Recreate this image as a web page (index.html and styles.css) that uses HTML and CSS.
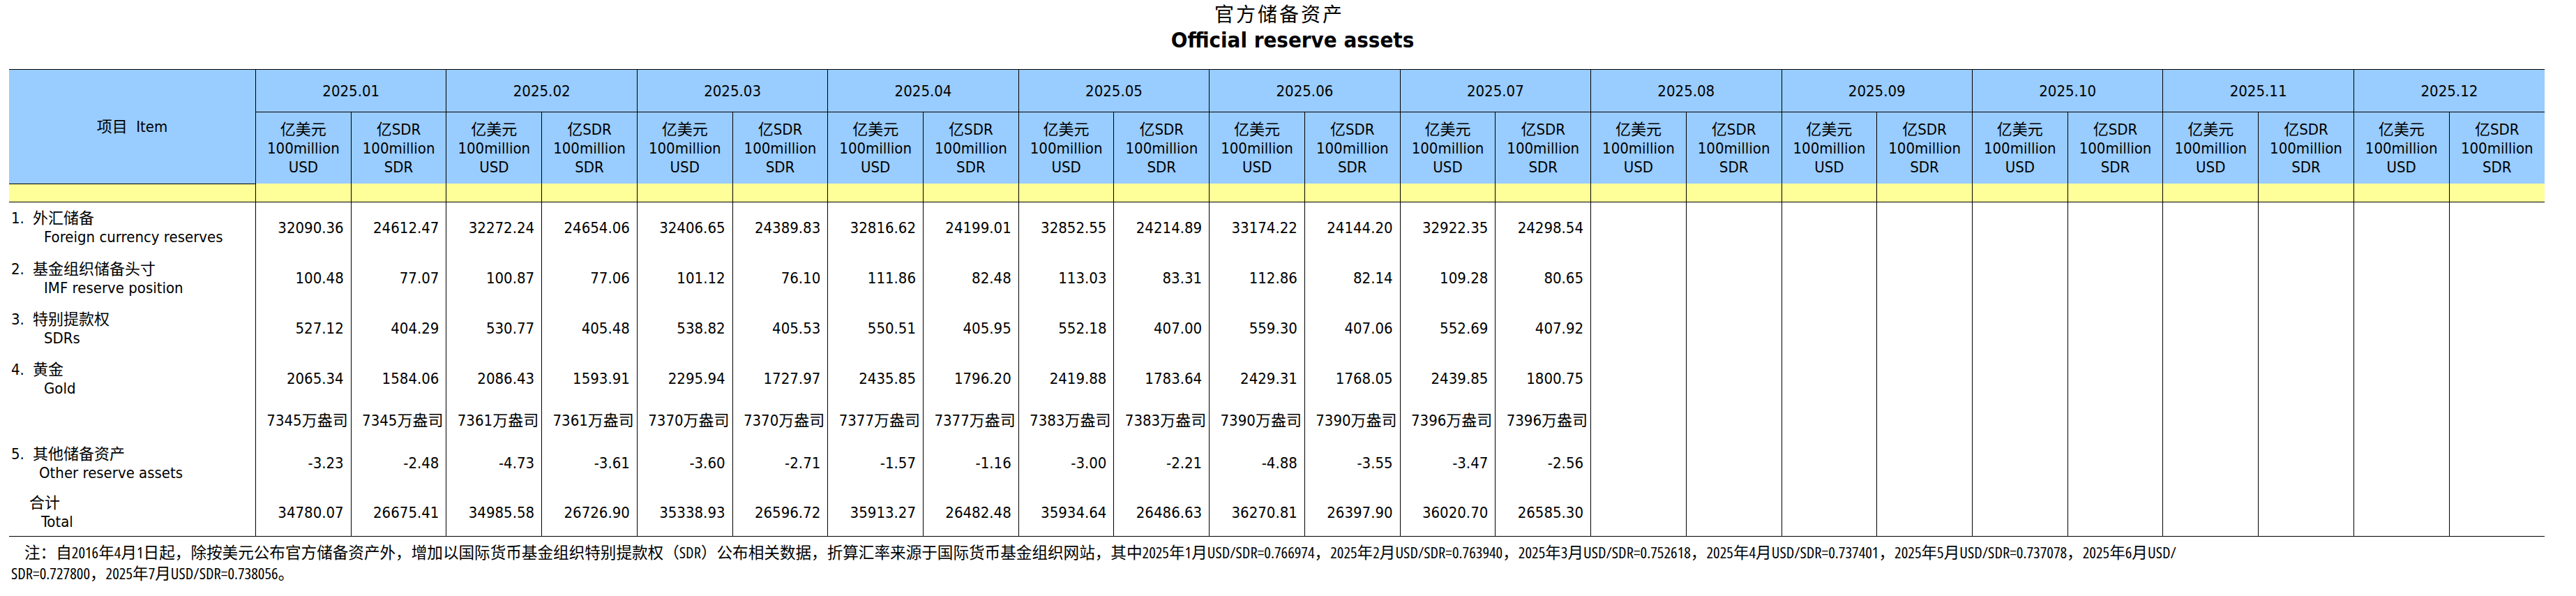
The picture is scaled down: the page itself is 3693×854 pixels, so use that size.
FILE: index.html
```html
<!DOCTYPE html>
<html lang="zh-CN">
<head>
<meta charset="utf-8">
<title>官方储备资产 Official reserve assets</title>
<link rel="stylesheet" href="styles.css">
</head>
<body>
<div class="page">
  <div class="title title-zh">官方储备资产</div>
  <div class="title title-en">Official reserve assets</div>
  <table class="reserves">
    <thead>
      <tr class="months">
        <th class="item-head" rowspan="2">项目&nbsp;&nbsp;Item</th>
        <th colspan="2">2025.01</th>
        <th colspan="2">2025.02</th>
        <th colspan="2">2025.03</th>
        <th colspan="2">2025.04</th>
        <th colspan="2">2025.05</th>
        <th colspan="2">2025.06</th>
        <th colspan="2">2025.07</th>
        <th colspan="2">2025.08</th>
        <th colspan="2">2025.09</th>
        <th colspan="2">2025.10</th>
        <th colspan="2">2025.11</th>
        <th colspan="2">2025.12</th>
      </tr>
      <tr class="units">
        <th>亿美元<br>100million<br>USD</th><th>亿SDR<br>100million<br>SDR</th>
        <th>亿美元<br>100million<br>USD</th><th>亿SDR<br>100million<br>SDR</th>
        <th>亿美元<br>100million<br>USD</th><th>亿SDR<br>100million<br>SDR</th>
        <th>亿美元<br>100million<br>USD</th><th>亿SDR<br>100million<br>SDR</th>
        <th>亿美元<br>100million<br>USD</th><th>亿SDR<br>100million<br>SDR</th>
        <th>亿美元<br>100million<br>USD</th><th>亿SDR<br>100million<br>SDR</th>
        <th>亿美元<br>100million<br>USD</th><th>亿SDR<br>100million<br>SDR</th>
        <th>亿美元<br>100million<br>USD</th><th>亿SDR<br>100million<br>SDR</th>
        <th>亿美元<br>100million<br>USD</th><th>亿SDR<br>100million<br>SDR</th>
        <th>亿美元<br>100million<br>USD</th><th>亿SDR<br>100million<br>SDR</th>
        <th>亿美元<br>100million<br>USD</th><th>亿SDR<br>100million<br>SDR</th>
        <th>亿美元<br>100million<br>USD</th><th>亿SDR<br>100million<br>SDR</th>
      </tr>
      <tr class="spacer">
        <td></td>
        <td></td><td></td><td></td><td></td><td></td><td></td><td></td><td></td><td></td><td></td><td></td><td></td>
        <td></td><td></td><td></td><td></td><td></td><td></td><td></td><td></td><td></td><td></td><td></td><td></td>
      </tr>
    </thead>
    <tbody>
      <tr class="row r1">
        <td class="item"><div class="zh"><span class="no">1.</span>外汇储备</div><div class="en">Foreign currency reserves</div></td>
        <td class="val">32090.36</td><td class="val">24612.47</td>
        <td class="val">32272.24</td><td class="val">24654.06</td>
        <td class="val">32406.65</td><td class="val">24389.83</td>
        <td class="val">32816.62</td><td class="val">24199.01</td>
        <td class="val">32852.55</td><td class="val">24214.89</td>
        <td class="val">33174.22</td><td class="val">24144.20</td>
        <td class="val">32922.35</td><td class="val">24298.54</td>
        <td></td><td></td><td></td><td></td><td></td><td></td><td></td><td></td><td></td><td></td>
      </tr>
      <tr class="row r2">
        <td class="item"><div class="zh"><span class="no">2.</span>基金组织储备头寸</div><div class="en">IMF reserve position</div></td>
        <td class="val">100.48</td><td class="val">77.07</td>
        <td class="val">100.87</td><td class="val">77.06</td>
        <td class="val">101.12</td><td class="val">76.10</td>
        <td class="val">111.86</td><td class="val">82.48</td>
        <td class="val">113.03</td><td class="val">83.31</td>
        <td class="val">112.86</td><td class="val">82.14</td>
        <td class="val">109.28</td><td class="val">80.65</td>
        <td></td><td></td><td></td><td></td><td></td><td></td><td></td><td></td><td></td><td></td>
      </tr>
      <tr class="row r3">
        <td class="item"><div class="zh"><span class="no">3.</span>特别提款权</div><div class="en">SDRs</div></td>
        <td class="val">527.12</td><td class="val">404.29</td>
        <td class="val">530.77</td><td class="val">405.48</td>
        <td class="val">538.82</td><td class="val">405.53</td>
        <td class="val">550.51</td><td class="val">405.95</td>
        <td class="val">552.18</td><td class="val">407.00</td>
        <td class="val">559.30</td><td class="val">407.06</td>
        <td class="val">552.69</td><td class="val">407.92</td>
        <td></td><td></td><td></td><td></td><td></td><td></td><td></td><td></td><td></td><td></td>
      </tr>
      <tr class="row r4">
        <td class="item"><div class="zh"><span class="no">4.</span>黄金</div><div class="en">Gold</div></td>
        <td class="val">2065.34</td><td class="val">1584.06</td>
        <td class="val">2086.43</td><td class="val">1593.91</td>
        <td class="val">2295.94</td><td class="val">1727.97</td>
        <td class="val">2435.85</td><td class="val">1796.20</td>
        <td class="val">2419.88</td><td class="val">1783.64</td>
        <td class="val">2429.31</td><td class="val">1768.05</td>
        <td class="val">2439.85</td><td class="val">1800.75</td>
        <td></td><td></td><td></td><td></td><td></td><td></td><td></td><td></td><td></td><td></td>
      </tr>
      <tr class="row oz">
        <td class="item"></td>
        <td class="val ounce">7345万盎司</td><td class="val ounce">7345万盎司</td>
        <td class="val ounce">7361万盎司</td><td class="val ounce">7361万盎司</td>
        <td class="val ounce">7370万盎司</td><td class="val ounce">7370万盎司</td>
        <td class="val ounce">7377万盎司</td><td class="val ounce">7377万盎司</td>
        <td class="val ounce">7383万盎司</td><td class="val ounce">7383万盎司</td>
        <td class="val ounce">7390万盎司</td><td class="val ounce">7390万盎司</td>
        <td class="val ounce">7396万盎司</td><td class="val ounce">7396万盎司</td>
        <td></td><td></td><td></td><td></td><td></td><td></td><td></td><td></td><td></td><td></td>
      </tr>
      <tr class="row r5">
        <td class="item"><div class="zh"><span class="no">5.</span>其他储备资产</div><div class="en en-other">Other reserve assets</div></td>
        <td class="val">-3.23</td><td class="val">-2.48</td>
        <td class="val">-4.73</td><td class="val">-3.61</td>
        <td class="val">-3.60</td><td class="val">-2.71</td>
        <td class="val">-1.57</td><td class="val">-1.16</td>
        <td class="val">-3.00</td><td class="val">-2.21</td>
        <td class="val">-4.88</td><td class="val">-3.55</td>
        <td class="val">-3.47</td><td class="val">-2.56</td>
        <td></td><td></td><td></td><td></td><td></td><td></td><td></td><td></td><td></td><td></td>
      </tr>
      <tr class="row total">
        <td class="item"><div class="zh zh-total">合计</div><div class="en en-total">Total</div></td>
        <td class="val">34780.07</td><td class="val">26675.41</td>
        <td class="val">34985.58</td><td class="val">26726.90</td>
        <td class="val">35338.93</td><td class="val">26596.72</td>
        <td class="val">35913.27</td><td class="val">26482.48</td>
        <td class="val">35934.64</td><td class="val">26486.63</td>
        <td class="val">36270.81</td><td class="val">26397.90</td>
        <td class="val">36020.70</td><td class="val">26585.30</td>
        <td></td><td></td><td></td><td></td><td></td><td></td><td></td><td></td><td></td><td></td>
      </tr>
    </tbody>
  </table>
  <p class="note">注：自2016年4月1日起，除按美元公布官方储备资产外，增加以国际货币基金组织特别提款权（SDR）公布相关数据，折算汇率来源于国际货币基金组织网站，其中2025年1月USD/SDR=0.766974，2025年2月USD/SDR=0.763940，2025年3月USD/SDR=0.752618，2025年4月USD/SDR=0.737401，2025年5月USD/SDR=0.737078，2025年6月USD/<br>SDR=0.727800，2025年7月USD/SDR=0.738056。</p>
</div>
</body>
</html>
```

FILE: styles.css
```css
html, body {
  margin: 0;
  padding: 0;
  background: #ffffff;
}

body {
  color: #000000;
  font-family: "DejaVu Sans Condensed", "DejaVu Sans", "Noto Sans CJK SC", sans-serif;
  font-stretch: semi-condensed;
  font-size: 22px;
}

.page {
  width: 3635px;
  padding-left: 13px;
}

.title {
  text-align: center;
  line-height: 38px;
}

.title-zh {
  font-family: "Noto Sans CJK SC", sans-serif;
  font-size: 28px;
  letter-spacing: 3px;
  padding-left: 7px;
}

.title-en {
  font-weight: bold;
  font-size: 31px;
  padding-left: 45px;
}

.reserves {
  width: 3635px;
  table-layout: fixed;
  border-collapse: collapse;
  margin-top: 23px;
}

.reserves th,
.reserves td {
  padding: 0;
  border-right: 1px solid #000000;
  line-height: 27px;
}

.reserves tr > :last-child {
  border-right: none;
}

.reserves th {
  background: #99ccff;
  font-weight: normal;
  text-align: center;
  vertical-align: middle;
}

.item-head {
  width: 353px;
  border-top: 1px solid #000000;
}

.months th {
  height: 60px;
  border-top: 1px solid #000000;
  border-bottom: 1px solid #000000;
}

.units th {
  height: 102px;
}

.spacer td {
  height: 25px;
  background: #ffff99;
  border-bottom: 1px solid #000000;
}

.row td {
  vertical-align: middle;
}

.r1 td { height: 73px; }
.r2 td { height: 72px; }
.r3 td { height: 72px; }
.r4 td { height: 72px; }
.oz td { height: 48px; }
.r5 td { height: 74px; }
.total td {
  height: 67px;
  border-bottom: 1px solid #000000;
}

.item {
  padding-left: 3px !important;
  white-space: nowrap;
}

.no {
  display: inline-block;
  width: 31px;
}

.en {
  padding-left: 47px;
}

.en-other {
  padding-left: 40px;
}

.zh-total {
  padding-left: 26px;
}

.en-total {
  padding-left: 43px;
}

.val {
  text-align: right;
  padding-right: 10px !important;
  white-space: nowrap;
}

.ounce {
  padding-right: 4px !important;
}

.note {
  margin: 8px 0 0 0;
  padding-left: 3px;
  text-indent: 19px;
  font-family: "Open Sans", "Noto Sans CJK SC", sans-serif;
  font-size: 22.6px;
  line-height: 30px;
  white-space: nowrap;
}
```
